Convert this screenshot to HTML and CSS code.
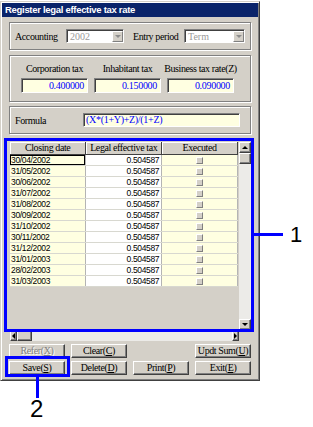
FILE: index.html
```html
<!DOCTYPE html>
<html lang="en">
<head>
    <meta charset="UTF-8">
    <meta name="viewport" content="width=device-width, initial-scale=1.0">
    <title>Register legal effective tax rate</title>
    <link rel="stylesheet" href="styles.css">
</head>
<body>

<div class="page">
    <div class="window">
        <div class="titlebar">Register legal effective tax rate</div>

        <div class="group group-period">
            <span class="label label-acc">Accounting</span>
            <div class="combo combo-year">
                <span class="combo-text">2002</span>
                <span class="combo-btn"><span class="arrow-down"></span></span>
            </div>
            <span class="label label-period">Entry period</span>
            <div class="combo combo-term">
                <span class="combo-text">Term</span>
                <span class="combo-btn"><span class="arrow-down"></span></span>
            </div>
        </div>

        <div class="group group-rates">
            <div class="rate">
                <span class="rate-label">Corporation tax</span>
                <div class="field">0.400000</div>
            </div>
            <div class="rate">
                <span class="rate-label">Inhabitant tax</span>
                <div class="field">0.150000</div>
            </div>
            <div class="rate">
                <span class="rate-label">Business tax rate(Z)</span>
                <div class="field">0.090000</div>
            </div>
        </div>

        <div class="group group-formula">
            <span class="label label-formula">Formula</span>
            <div class="field field-formula">(X*(1+Y)+Z)/(1+Z)</div>
        </div>

        <div class="grid">
            <div class="grid-body">
                <table class="tax-table">
                    <thead>
                        <tr><th>Closing date</th><th>Legal effective tax</th><th>Executed</th></tr>
                    </thead>
                    <tbody>
                        <tr><td class="date focus">30/04/2002</td><td class="rate-cell">0.504587</td><td class="exec"><span class="check"></span></td></tr>
                        <tr><td class="date">31/05/2002</td><td class="rate-cell">0.504587</td><td class="exec"><span class="check"></span></td></tr>
                        <tr><td class="date">30/06/2002</td><td class="rate-cell">0.504587</td><td class="exec"><span class="check"></span></td></tr>
                        <tr><td class="date">31/07/2002</td><td class="rate-cell">0.504587</td><td class="exec"><span class="check"></span></td></tr>
                        <tr><td class="date">31/08/2002</td><td class="rate-cell">0.504587</td><td class="exec"><span class="check"></span></td></tr>
                        <tr><td class="date">30/09/2002</td><td class="rate-cell">0.504587</td><td class="exec"><span class="check"></span></td></tr>
                        <tr><td class="date">31/10/2002</td><td class="rate-cell">0.504587</td><td class="exec"><span class="check"></span></td></tr>
                        <tr><td class="date">30/11/2002</td><td class="rate-cell">0.504587</td><td class="exec"><span class="check"></span></td></tr>
                        <tr><td class="date">31/12/2002</td><td class="rate-cell">0.504587</td><td class="exec"><span class="check"></span></td></tr>
                        <tr><td class="date">31/01/2003</td><td class="rate-cell">0.504587</td><td class="exec"><span class="check"></span></td></tr>
                        <tr><td class="date">28/02/2003</td><td class="rate-cell">0.504587</td><td class="exec"><span class="check"></span></td></tr>
                        <tr><td class="date">31/03/2003</td><td class="rate-cell">0.504587</td><td class="exec"><span class="check"></span></td></tr>
                    </tbody>
                </table>
            </div>
            <div class="vscroll">
                <span class="sb-btn"><span class="arrow-up"></span></span>
                <span class="sb-thumb-v"></span>
                <span class="sb-track"></span>
                <span class="sb-btn"><span class="arrow-down dark"></span></span>
            </div>
            <div class="hscroll">
                <span class="sb-btn"><span class="arrow-left"></span></span>
                <span class="sb-thumb-h"></span>
                <span class="sb-track"></span>
                <span class="sb-btn"><span class="arrow-right"></span></span>
            </div>
            <div class="corner"></div>
        </div>

        <div class="buttons">
            <button class="btn disabled">Refer(<u>X</u>)</button>
            <button class="btn">Clear(<u>C</u>)</button>
            <span></span>
            <button class="btn">Updt Sum(<u>U</u>)</button>
            <button class="btn">Save(<u>S</u>)</button>
            <button class="btn">Delete(<u>D</u>)</button>
            <button class="btn">Print(<u>P</u>)</button>
            <button class="btn">Exit(<u>E</u>)</button>
        </div>
    </div>

    <!-- callouts drawn over the dialog -->
    <div class="callout callout-grid"></div>
    <div class="leader leader-1"></div>
    <div class="callout-num num-1">1</div>

    <div class="callout callout-save"></div>
    <div class="leader leader-2"></div>
    <div class="callout-num num-2">2</div>
</div>

</body>
</html>
```

FILE: styles.css
```css
body {
    margin: 0;
    background-color: #fff;
    font-family: 'Liberation Serif', serif;
    font-size: 10px;
    color: #000;
}
.page {
    position: relative;
    width: 313px;
    height: 427px;
    overflow: hidden;
}
.window {
    margin-top: 1px;
    width: 260px;
    height: 380px;
    box-sizing: border-box;
    padding: 1px;
    background-color: #d4d0c8;
    border: 1px solid;
    border-color: #d4d0c8 #404040 #404040 #d4d0c8;
    box-shadow: inset 1px 1px 0 #fff, inset -1px -1px 0 #808080;
}
.titlebar {
    height: 14px;
    line-height: 14px;
    padding-left: 3px;
    background-color: #0a246a;
    color: #fff;
    font-family: 'Liberation Sans', sans-serif;
    font-weight: bold;
    font-size: 9.5px;
    letter-spacing: -0.3px;
    white-space: nowrap;
}

/* group boxes */
.group {
    margin: 0 7px;
    box-sizing: border-box;
    border: 1px solid #808080;
    box-shadow: inset 1px 1px 0 #fff, 1px 1px 0 #fff;
}
.group-period {
    margin-top: 5px;
    height: 28px;
    display: flex;
    align-items: center;
    padding-left: 5px;
}
.label {
    letter-spacing: -0.4px;
    white-space: nowrap;
}
.label-acc {
    width: 51px;
}
.label-period {
    width: 51px;
    margin-left: 9px;
}
.combo {
    height: 14px;
    box-sizing: border-box;
    display: flex;
    background-color: #fff;
    border: 1px solid;
    border-color: #808080 #fff #fff #808080;
    box-shadow: inset 1px 1px 0 #404040;
}
.combo-year {
    width: 58px;
}
.combo-term {
    width: 61px;
}
.combo-text {
    flex: 1;
    padding: 1px 0 0 3px;
    line-height: 11px;
    color: #9a9a9a;
}
.combo-btn {
    width: 11px;
    margin: 1px 0 0 0;
    box-sizing: border-box;
    display: flex;
    align-items: center;
    justify-content: center;
    background-color: #d4d0c8;
    border: 1px solid;
    border-color: #fff #808080 #808080 #fff;
}
.arrow-down {
    width: 0;
    height: 0;
    border-left: 3px solid transparent;
    border-right: 3px solid transparent;
    border-top: 3px solid #8c8c8c;
}
.arrow-down.dark {
    border-top-color: #000;
}
.arrow-up {
    width: 0;
    height: 0;
    border-left: 3px solid transparent;
    border-right: 3px solid transparent;
    border-bottom: 3px solid #000;
}
.arrow-left {
    width: 0;
    height: 0;
    border-top: 3px solid transparent;
    border-bottom: 3px solid transparent;
    border-right: 3px solid #000;
}
.arrow-right {
    width: 0;
    height: 0;
    border-top: 3px solid transparent;
    border-bottom: 3px solid transparent;
    border-left: 3px solid #000;
}

.group-rates {
    margin-top: 5px;
    height: 47px;
    padding: 7px 0 0 11px;
    display: grid;
    grid-template-columns: repeat(3, 67px);
    column-gap: 6px;
    align-content: start;
}
.rate {
    display: flex;
    flex-direction: column;
    align-items: center;
}
.rate-label {
    height: 11px;
    line-height: 11px;
    letter-spacing: -0.4px;
    white-space: nowrap;
}
.field {
    height: 15px;
    width: 100%;
    box-sizing: border-box;
    margin-top: 4px;
    padding: 0 3px;
    line-height: 13px;
    text-align: right;
    color: #0000ff;
    letter-spacing: -0.3px;
    background-color: #ffffe1;
    border: 1px solid;
    border-color: #808080 #fff #fff #808080;
    box-shadow: inset 1px 1px 0 #404040;
}

.group-formula {
    margin-top: 4px;
    height: 28px;
    display: flex;
    align-items: center;
    padding-left: 5px;
}
.label-formula {
    width: 68px;
}
.field-formula {
    margin-top: 0;
    width: 157px;
    height: 14px;
    line-height: 12px;
    text-align: left;
    padding-left: 2px;
}

/* data grid */
.grid {
    margin: 8px 0 0 8px;
    width: 241px;
    height: 199px;
    display: grid;
    grid-template-columns: 229px 12px;
    grid-template-rows: 188px 11px;
}
.grid-body {
    background-color: #d4d0c8;
    overflow: hidden;
}
.tax-table {
    border-collapse: collapse;
    table-layout: fixed;
    width: 228px;
    border-right: 1px solid #404040;
    border-bottom: 1px solid #404040;
}
.tax-table th {
    height: 12px;
    padding: 0;
    font-weight: normal;
    font-size: 10px;
    line-height: 12px;
    letter-spacing: -0.4px;
    background-color: #d4d0c8;
    border-right: 1px solid #404040;
    border-bottom: 1px solid #404040;
    box-shadow: inset 1px 1px 0 #fff;
    white-space: nowrap;
}
.tax-table td {
    height: 10px;
    padding: 0;
    line-height: 10px;
    font-family: 'Liberation Sans', sans-serif;
    font-size: 8.5px;
    letter-spacing: -0.35px;
    border-right: 1px solid #b4b4b4;
    border-bottom: 1px solid #d8d8d0;
    white-space: nowrap;
    overflow: hidden;
}
.tax-table td.date {
    padding-left: 1px;
    background-color: #ffffe1;
}
.tax-table td.focus {
    box-shadow: inset 0 0 0 1px #000;
}
.tax-table td.rate-cell {
    text-align: right;
    padding-right: 2px;
    background-color: #fff;
}
.tax-table td.exec {
    text-align: center;
    background-color: #ffffe1;
}
.check {
    display: inline-block;
    vertical-align: middle;
    width: 7px;
    height: 7px;
    box-sizing: border-box;
    background-color: #d4d0c8;
    border: 1px solid;
    border-color: #fff #808080 #808080 #fff;
}

.vscroll, .hscroll {
    display: flex;
    background-color: #ecebe8;
}
.vscroll {
    flex-direction: column;
}
.sb-btn, .sb-thumb-v, .sb-thumb-h {
    box-sizing: border-box;
    display: flex;
    align-items: center;
    justify-content: center;
    background-color: #d4d0c8;
    border: 1px solid;
    border-color: #fff #404040 #404040 #fff;
    box-shadow: inset -1px -1px 0 #808080;
}
.vscroll .sb-btn {
    height: 11px;
}
.sb-thumb-v {
    height: 11px;
}
.hscroll .sb-btn {
    width: 7px;
}
.sb-thumb-h {
    width: 15px;
}
.sb-track {
    flex: 1;
}
.corner {
    background-color: #d4d0c8;
}

/* command buttons */
.buttons {
    margin: 3px 0 0 7px;
    display: grid;
    grid-template-columns: repeat(4, 56px);
    grid-auto-rows: 14px;
    column-gap: 6px;
    row-gap: 3px;
}
.btn {
    margin: 0;
    padding: 0;
    font-family: 'Liberation Serif', serif;
    font-size: 10px;
    letter-spacing: -0.4px;
    line-height: 12px;
    color: #000;
    background-color: #d4d0c8;
    border: 1px solid;
    border-color: #fff #404040 #404040 #fff;
    box-shadow: inset -1px -1px 0 #808080;
}
.btn.disabled {
    color: #808080;
    text-shadow: 1px 1px 0 #fff;
}

/* callouts over the dialog */
.callout {
    position: absolute;
    box-sizing: border-box;
    border: 3px solid #0000ff;
}
.callout-grid {
    left: 4px;
    top: 138px;
    width: 250px;
    height: 194px;
}
.callout-save {
    left: 5px;
    top: 356px;
    width: 65px;
    height: 21px;
}
.leader {
    position: absolute;
    background-color: #0000ff;
}
.leader-1 {
    left: 254px;
    top: 233px;
    width: 29px;
    height: 3px;
}
.leader-2 {
    left: 36px;
    top: 377px;
    width: 3px;
    height: 21px;
}
.callout-num {
    position: absolute;
    font-family: 'Liberation Sans', sans-serif;
    line-height: 1;
    color: #000;
}
.num-1 {
    left: 290px;
    top: 224px;
    font-size: 22px;
}
.num-2 {
    left: 30px;
    top: 397px;
    font-size: 24px;
}
```
